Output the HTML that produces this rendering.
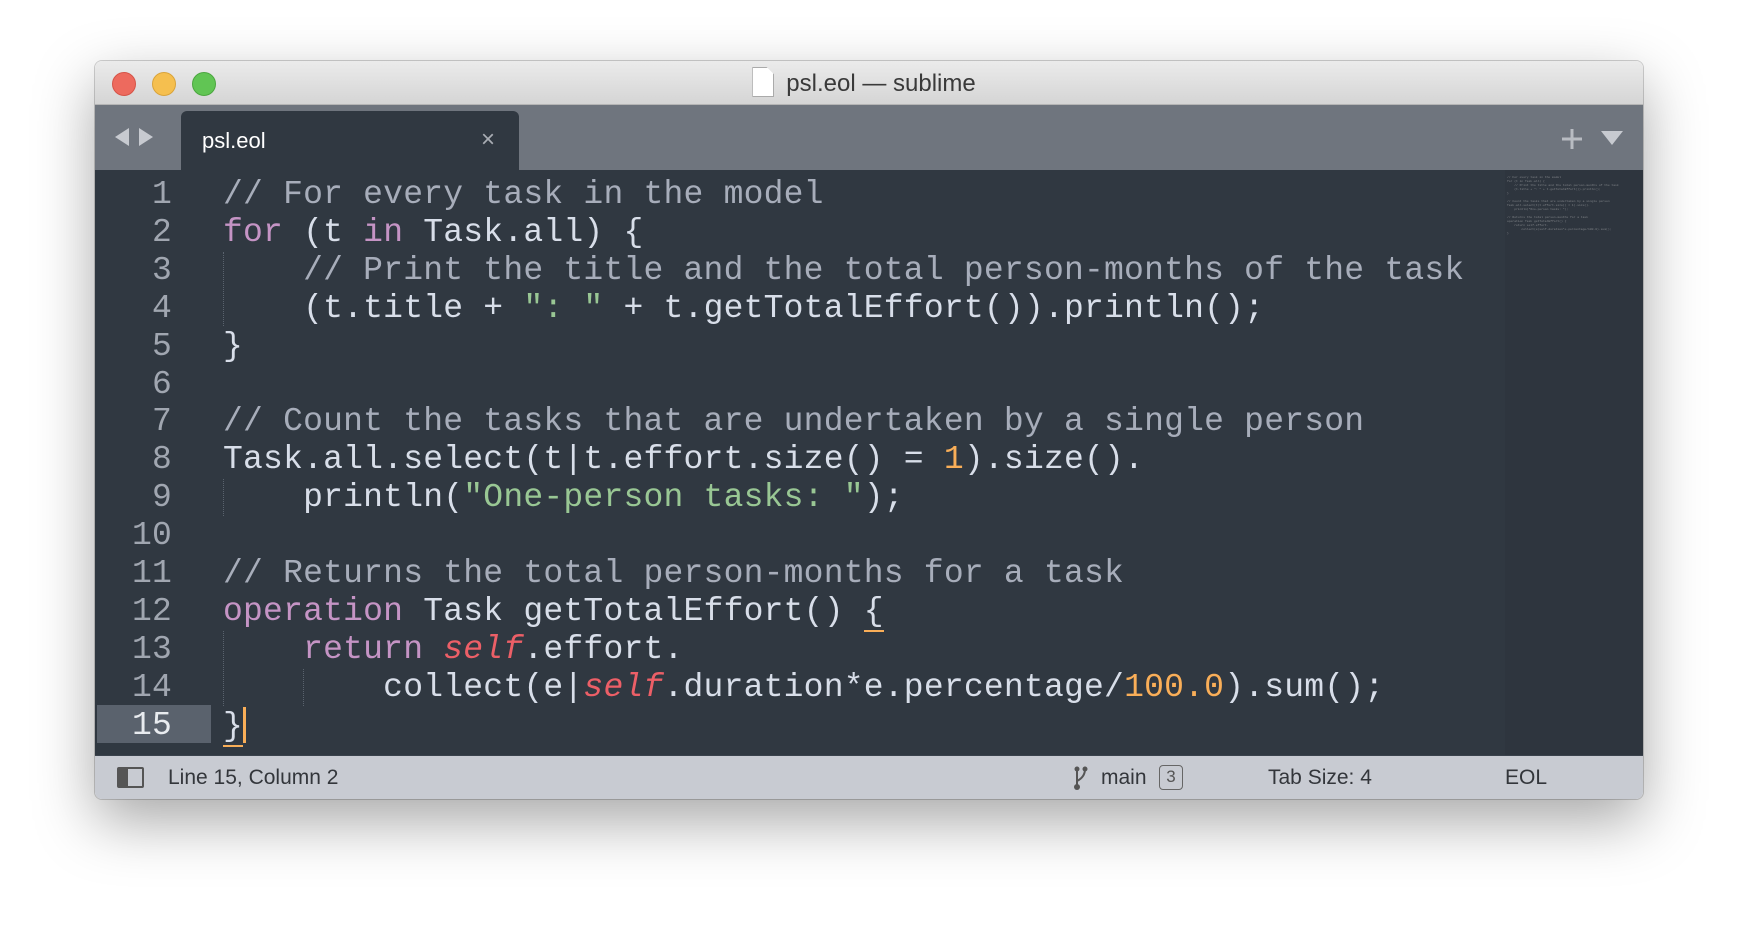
<!DOCTYPE html>
<html><head><meta charset="utf-8"><style>
*{margin:0;padding:0;box-sizing:border-box}
body{width:1738px;height:938px;background:#fff;position:relative;overflow:hidden;font-family:"Liberation Sans",sans-serif}
.win{position:absolute;left:95px;top:61px;width:1548px;height:738px;border-radius:7px;overflow:hidden;box-shadow:0 22px 60px rgba(0,0,0,.35),0 0 0 1px rgba(0,0,0,.18)}
.title{position:absolute;left:0;top:0;width:100%;height:44px;background:linear-gradient(#ebebeb,#d5d5d5);border-bottom:1px solid #b5b5b5;text-align:center;font-size:24px;color:#3a3a3a;line-height:46px;padding-right:10px}
.dot{position:absolute;top:11px;width:24px;height:24px;border-radius:50%}
.tabbar{position:absolute;left:0;top:44px;width:100%;height:65px;background:#6f757e}
.tab{position:absolute;left:86px;top:6px;width:338px;height:59px;background:#303841;border-radius:6px 6px 0 0;color:#fff;font-size:22px}
.editor{position:absolute;left:0;top:109px;width:100%;height:585px;background:#303841}
.code{position:absolute;left:0;top:6px;font-family:"Liberation Mono",monospace;font-size:33px;letter-spacing:0.22px;line-height:37.9px;white-space:pre;color:#d8dee9}
.ln{position:absolute;left:0;width:77px;text-align:right;color:#a0a6b0}
.l{position:absolute;left:128px}
.c{color:#a7adba}.k{color:#c594c5}.s{color:#99c794}.n{color:#f9ae58}.r{color:#ec5f67;font-style:italic}
.status{position:absolute;left:0;top:694px;width:100%;height:44px;background:#c8cbd2;border-top:1px solid #3a424c;font-size:21px;color:#33363b;line-height:44px}
.guide{position:absolute;width:0;border-left:1px dotted #5a636e}
</style></head><body>
<div class="win">
 <div class="title">
  <div class="dot" style="left:17px;background:#ed6a5e;border:1px solid #d55448"></div>
  <div class="dot" style="left:57px;background:#f5bf4f;border:1px solid #d9a33a"></div>
  <div class="dot" style="left:97px;background:#61c554;border:1px solid #4ba63f"></div>
  <span style="display:inline-block;width:22px;height:30px;background:#fff;border:1px solid #aaa;vertical-align:-6px;margin-right:12px;clip-path:polygon(0 0,65% 0,100% 25%,100% 100%,0 100%)"></span>psl.eol — sublime
 </div>
 <div class="tabbar">
  <svg style="position:absolute;left:18px;top:21px" width="42" height="22"><path d="M16 2 L2 11 L16 20Z" fill="#c7cad0"/><path d="M26 2 L40 11 L26 20Z" fill="#c7cad0"/></svg>
  <div class="tab"><span style="position:absolute;left:21px;top:17px">psl.eol</span><span style="position:absolute;left:300px;top:15px;color:#a9adb4;font-size:24px">×</span></div>
  <svg style="position:absolute;left:1466px;top:22px" width="70" height="24"><path d="M11 2V22M1 12H21" stroke="#b8bcc2" stroke-width="3"/><path d="M40 4H62L51 18Z" fill="#c7cad0"/></svg>
 </div>
 <div class="editor">
  <div style="position:absolute;left:2px;top:535px;width:114px;height:38px;background:#5a626d"></div>
  <div style="position:absolute;left:1410px;top:0;width:138px;height:585px;background:#2e353e"></div>
  <div class="guide" style="left:128px;top:82px;height:74px"></div>
  <div class="guide" style="left:128px;top:309px;height:37px"></div>
  <div class="guide" style="left:128px;top:461px;height:75px"></div>
  <div class="guide" style="left:208px;top:499px;height:37px"></div>
  <div class="code">
<div class="ln" style="top:0">1
2
3
4
5
6
7
8
9
10
11
12
13
14
<span style="color:#e8ebef">15</span></div><div class="l" style="top:0"><span class="c">// For every task in the model</span>
<span class="k">for</span> (t <span class="k">in</span> Task.all) {
    <span class="c">// Print the title and the total person-months of the task</span>
    (t.title + <span class="s">": "</span> + t.getTotalEffort()).println();
}

<span class="c">// Count the tasks that are undertaken by a single person</span>
Task.all.select(t|t.effort.size() = <span class="n">1</span>).size().
    println(<span class="s">"One-person tasks: "</span>);

<span class="c">// Returns the total person-months for a task</span>
<span class="k">operation</span> Task getTotalEffort() <span style="border-bottom:2px solid #f9ae58">{</span>
    <span class="k">return</span> <span class="r">self</span>.effort.
        collect(e|<span class="r">self</span>.duration*e.percentage/<span class="n">100.0</span>).sum();
<span style="border-bottom:2px solid #f9ae58">}</span><span style="display:inline-block;width:3px;height:36px;background:#f9ae58;vertical-align:-8px"></span></div>
  </div>
  <div style="position:absolute;left:1412px;top:6px;width:125px;height:55px;opacity:.5;font-family:'Liberation Mono',monospace;font-size:3px;line-height:4px;color:#ccc;white-space:pre">// For every task in the model
for (t in Task.all) {
    // Print the title and the total person-months of the task
    (t.title + ": " + t.getTotalEffort()).println();
}

// Count the tasks that are undertaken by a single person
Task.all.select(t|t.effort.size() = 1).size().
    println("One-person tasks: ");

// Returns the total person-months for a task
operation Task getTotalEffort() {
    return self.effort.
        collect(e|self.duration*e.percentage/100.0).sum();
}</div>
 </div>
 <div class="status">
  <span style="position:absolute;left:22px;top:11px;width:27px;height:21px;border:2px solid #555;border-radius:2px"><span style="position:absolute;left:0;top:0;width:9px;height:100%;background:#555"></span></span>
  <span style="position:absolute;left:73px">Line 15, Column 2</span>
  <svg style="position:absolute;left:978px;top:9px" width="16" height="26"><circle cx="4" cy="22" r="3" fill="#555"/><circle cx="12" cy="4" r="2.5" fill="#555"/><circle cx="4" cy="4" r="2.5" fill="#555"/><path d="M4 4V22M12 4Q12 12 4 16" stroke="#555" stroke-width="2" fill="none"/></svg>
  <span style="position:absolute;left:1006px">main</span>
  <span style="position:absolute;left:1064px;top:9px;width:24px;height:25px;border:1.5px solid #666;border-radius:4px;font-size:17px;line-height:22px;text-align:center;color:#555">3</span>
  <span style="position:absolute;left:1173px">Tab Size: 4</span>
  <span style="position:absolute;left:1410px">EOL</span>
 </div>
</div>
</body></html>
